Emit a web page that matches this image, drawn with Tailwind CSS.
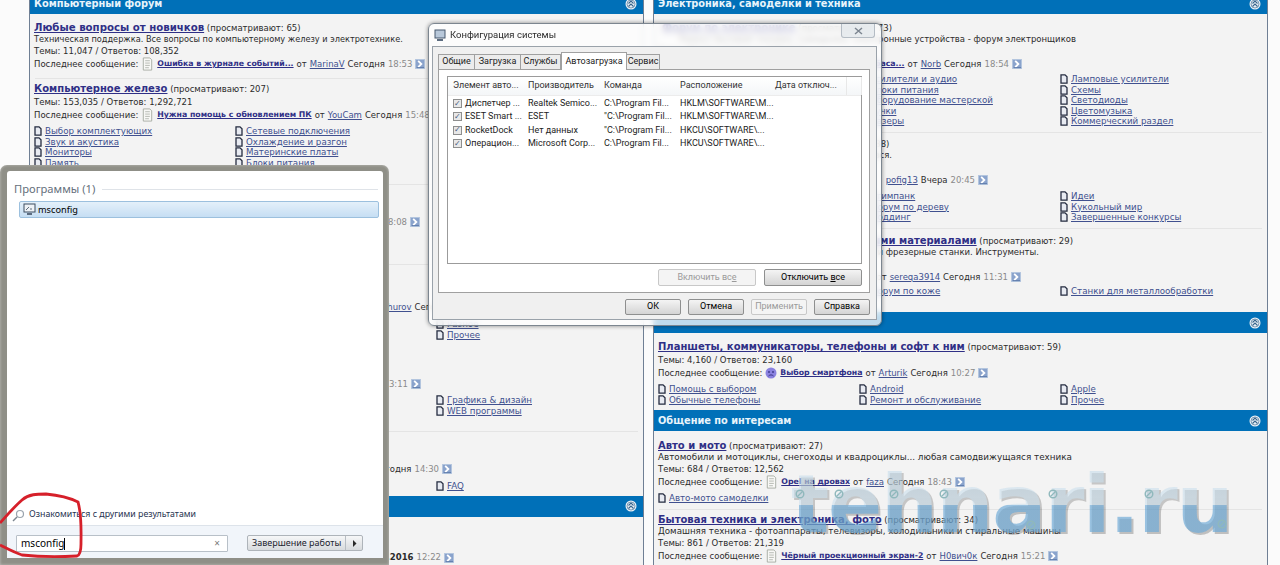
<!DOCTYPE html>
<html lang="ru">
<head>
<meta charset="utf-8">
<title>msconfig</title>
<script src="https://cdn.jsdelivr.net/npm/@tailwindcss/browser@4"></script>
</head>
<body class="m-0">
<svg class="hidden" width="0" height="0">
  <symbol id="doc" viewBox="0 0 8 10"><path d="M1 .8h4l2 2v6.400H1z" fill="#e8ebf2" stroke="#252c40" stroke-width="1.300"/></symbol>
  <symbol id="post" viewBox="0 0 13 15"><path d="M2 1h7l2 2v11H2z" fill="#f8f8f6" stroke="#a8aca4"/><path d="M4 4h5M4 6.500h5M4 9h5M4 11.500h4" stroke="#b4b8b0"/></symbol>
  <symbol id="go" viewBox="0 0 11 11"><rect width="11" height="11" fill="#8aa3cc"/><rect x=".5" y=".5" width="10" height="10" fill="none" stroke="#b8c8e0"/><path d="M3.500 2l3.500 3.500-3.500 3.500" fill="none" stroke="#fff" stroke-width="2"/><path d="M2 9.500h8" stroke="#5c78a8"/></symbol>
  <symbol id="up" viewBox="0 0 12 12"><circle cx="6" cy="6" r="5.500" fill="#e9f0f6"/><circle cx="6" cy="6" r="4" fill="none" stroke="#7c9ab4"/><path d="M3.500 5.500L6 3l2.500 2.500M3.500 8.500L6 6l2.500 2.500" fill="none" stroke="#38658c" stroke-width="1.100"/></symbol>
  <symbol id="mark" viewBox="0 0 10 10"><circle cx="5" cy="5" r="3.800" fill="none" stroke="#8fb8bc" stroke-width="1.400"/><path d="M2.500 7.500l5-5" stroke="#8fb8bc" stroke-width="1.200"/></symbol>
</svg>

<div class="relative w-[1280px] h-[565px] overflow-hidden bg-[#fbfbfb] font-['DejaVu_Sans',sans-serif] text-[8.500px] text-[#2b2b2b] blur-[0.45px]">
  <div class="flex h-[565px] pl-[29px] gap-[9px]">

    <!-- left column -->
    <div class="w-[615px] h-[565px] shrink-0 overflow-hidden bg-[#f3f3f3] border-x border-[#6f7f94]">
      <div class="h-[21px] -mt-[7px] bg-[#0070b8] flex items-center justify-between pl-[4px] pr-[6px] text-[9.800px] font-bold text-[#e8f4fb]"><span class="mt-[2px]">Компьютерный форум</span><svg class="w-[12px] h-[12px]"><use href="#up"/></svg></div>
      <div class="pl-[4px]">
        <div class="h-[12px] mt-[8px] leading-[12px] whitespace-nowrap"><a class="text-[10.200px] font-bold underline text-[#2f2f86]">Любые вопросы от новичков</a> (просматривают: 65)</div>
        <div class="h-[11px] leading-[11px] text-[8.200px] whitespace-nowrap">Техническая поддержка. Все вопросы по компьютерному железу и электротехнике.</div>
        <div class="h-[12px] leading-[12px] whitespace-nowrap">Темы: 11,047 / Ответов: 108,352</div>
        <div class="h-[14px] flex items-center gap-[3px] whitespace-nowrap"><span>Последнее сообщение:</span><svg class="w-[13px] h-[14px]"><use href="#post"/></svg><a class="text-[7.800px] font-bold underline text-[#2f2f86]">Ошибка в журнале событий...</a><span>от</span><a class="underline text-[#40508f]">MarinaV</a><span>Сегодня</span><span class="text-[#8a8a8a]">18:53</span><svg class="w-[10px] h-[10px]"><use href="#go"/></svg></div>
      </div>
      <div class="h-px mt-[7px] mx-[5px] bg-[#e4e4e4]"></div>
      <div class="pl-[4px]">
        <div class="h-[12px] mt-[4px] leading-[12px] whitespace-nowrap"><a class="text-[10px] font-bold underline text-[#2f2f86]">Компьютерное железо</a> (просматривают: 207)</div>
        <div class="h-[12px] mt-px leading-[12px] whitespace-nowrap">Темы: 153,035 / Ответов: 1,292,721</div>
        <div class="h-[14px] flex items-center gap-[3px] whitespace-nowrap"><span>Последнее сообщение:</span><svg class="w-[13px] h-[14px]"><use href="#post"/></svg><a class="text-[7.800px] font-bold underline text-[#2f2f86]">Нужна помощь с обновлением ПК</a><span>от</span><a class="underline text-[#40508f]">YouCam</a><span>Сегодня</span><span class="text-[#8a8a8a]">15:48</span></div>
        <div class="grid grid-cols-[201px_201px_201px] mt-[4px] text-[8.700px] text-[#40508f] leading-[10.500px]">
          <div class="flex items-center gap-[3px] h-[10.500px]"><svg class="w-[8px] h-[10px]"><use href="#doc"/></svg><a class="underline">Выбор комплектующих</a></div>
          <div class="flex items-center gap-[3px] h-[10.500px]"><svg class="w-[8px] h-[10px]"><use href="#doc"/></svg><a class="underline">Сетевые подключения</a></div><div></div>
          <div class="flex items-center gap-[3px] h-[10.500px]"><svg class="w-[8px] h-[10px]"><use href="#doc"/></svg><a class="underline">Звук и акустика</a></div>
          <div class="flex items-center gap-[3px] h-[10.500px]"><svg class="w-[8px] h-[10px]"><use href="#doc"/></svg><a class="underline">Охлаждение и разгон</a></div><div></div>
          <div class="flex items-center gap-[3px] h-[10.500px]"><svg class="w-[8px] h-[10px]"><use href="#doc"/></svg><a class="underline">Мониторы</a></div>
          <div class="flex items-center gap-[3px] h-[10.500px]"><svg class="w-[8px] h-[10px]"><use href="#doc"/></svg><a class="underline">Материнские платы</a></div><div></div>
          <div class="flex items-center gap-[3px] h-[10.500px]"><svg class="w-[8px] h-[10px]"><use href="#doc"/></svg><a class="underline">Память</a></div>
          <div class="flex items-center gap-[3px] h-[10.500px]"><svg class="w-[8px] h-[10px]"><use href="#doc"/></svg><a class="underline">Блоки питания</a></div><div></div>
        </div>
      </div>
      <div class="h-px mt-[16px] mx-[5px] bg-[#e4e4e4]"></div>
      <div class="h-[12px] mt-[31px] w-[390px] flex justify-end items-center gap-[3px] whitespace-nowrap"><span>Сегодня</span><span class="text-[#8a8a8a]">18:08</span><svg class="w-[10px] h-[10px]"><use href="#go"/></svg></div>
      <div class="h-px mt-[36px] mx-[5px] bg-[#e4e4e4]"></div>
      <div class="h-[12px] mt-[36px] w-[422px] flex justify-end items-center gap-[3px] whitespace-nowrap"><a class="underline text-[#40508f]">Bahurov</a><span>Сегодня</span></div>
      <div class="mt-[6px] pl-[406px] text-[8.700px] text-[#40508f] leading-[10.500px]">
        <div class="flex items-center gap-[3px] h-[10.500px]"><svg class="w-[8px] h-[10px]"><use href="#doc"/></svg><a class="underline">Разное</a></div>
        <div class="flex items-center gap-[3px] h-[10.500px]"><svg class="w-[8px] h-[10px]"><use href="#doc"/></svg><a class="underline">Прочее</a></div>
      </div>
      <div class="h-[12px] mt-[38px] w-[391px] flex justify-end items-center gap-[3px] whitespace-nowrap"><span>Сегодня</span><span class="text-[#8a8a8a]">13:11</span><svg class="w-[10px] h-[10px]"><use href="#go"/></svg></div>
      <div class="mt-[5px] pl-[406px] text-[8.700px] text-[#40508f] leading-[10.500px]">
        <div class="flex items-center gap-[3px] h-[10.500px]"><svg class="w-[8px] h-[10px]"><use href="#doc"/></svg><a class="underline">Графика &amp; дизайн</a></div>
        <div class="flex items-center gap-[3px] h-[10.500px]"><svg class="w-[8px] h-[10px]"><use href="#doc"/></svg><a class="underline">WEB программы</a></div>
      </div>
      <div class="h-px mt-[15px] mx-[5px] bg-[#e4e4e4]"></div>
      <div class="h-[12px] mt-[31px] w-[422px] flex justify-end items-center gap-[3px] whitespace-nowrap"><span>Сегодня</span><span class="text-[#8a8a8a]">14:30</span><svg class="w-[10px] h-[10px]"><use href="#go"/></svg></div>
      <div class="mt-[6px] pl-[406px] text-[8.700px] text-[#40508f] leading-[10.500px]">
        <div class="flex items-center gap-[3px] h-[10.500px]"><svg class="w-[8px] h-[10px]"><use href="#doc"/></svg><a class="underline">FAQ</a></div>
      </div>
      <div class="h-[21px] mt-[4px] bg-[#0070b8] flex items-center justify-end pr-[6px]"><svg class="w-[12px] h-[12px]"><use href="#up"/></svg></div>
      <div class="h-[12px] mt-[35px] w-[424px] flex justify-end items-center gap-[3px] whitespace-nowrap"><span class="font-bold">12.03.2016</span><span class="text-[#8a8a8a]">12:22</span><svg class="w-[10px] h-[10px]"><use href="#go"/></svg></div>
    </div>

    <!-- right column -->
    <div class="w-[615px] h-[565px] shrink-0 overflow-hidden bg-[#f3f3f3] border-x border-[#6f7f94]">
      <div class="h-[21px] -mt-[7px] bg-[#0070b8] flex items-center justify-between pl-[4px] pr-[6px] text-[9.800px] font-bold text-[#e8f4fb]"><span class="mt-[2px]">Электроника, самоделки и техника</span><svg class="w-[12px] h-[12px]"><use href="#up"/></svg></div>
      <div class="pl-[4px]">
        <div class="h-[12px] mt-[8px] w-[234px] text-right leading-[12px] whitespace-nowrap"><a class="text-[10px] font-bold underline text-[#2f2f86]">Форум по электронике</a> (просматривают: 73)</div>
        <div class="h-[11px] w-[418px] text-right leading-[11px] whitespace-nowrap">Ремонт бытовой техники. Самоделки, электронные устройства - форум электронщиков</div>
        <div class="h-[12px] leading-[12px] whitespace-nowrap">Темы: 60,212 / Ответов: 520,114</div>
        <div class="h-[14px] w-[364px] flex justify-end items-center gap-[3px] whitespace-nowrap"><a class="text-[7.800px] font-bold underline text-[#2f2f86]">Проверка усилителя для баса...</a><span>от</span><a class="underline text-[#40508f]">Norb</a><span>Сегодня</span><span class="text-[#8a8a8a]">18:54</span><svg class="w-[10px] h-[10px]"><use href="#go"/></svg></div>
        <div class="grid grid-cols-[201px_201px_201px] mt-[3px] text-[8.700px] text-[#40508f] leading-[10.500px]">
          <div class="h-[10.500px]"></div><div class="flex items-center gap-[3px] h-[10.500px]"><svg class="w-[8px] h-[10px]"><use href="#doc"/></svg><a class="underline">Усилители и аудио</a></div><div class="flex items-center gap-[3px] h-[10.500px]"><svg class="w-[8px] h-[10px]"><use href="#doc"/></svg><a class="underline">Ламповые усилители</a></div>
          <div class="h-[10.500px]"></div><div class="flex items-center gap-[3px] h-[10.500px]"><svg class="w-[8px] h-[10px]"><use href="#doc"/></svg><a class="underline">Блоки питания</a></div><div class="flex items-center gap-[3px] h-[10.500px]"><svg class="w-[8px] h-[10px]"><use href="#doc"/></svg><a class="underline">Схемы</a></div>
          <div class="h-[10.500px]"></div><div class="flex items-center gap-[3px] h-[10.500px]"><svg class="w-[8px] h-[10px]"><use href="#doc"/></svg><a class="underline">Оборудование мастерской</a></div><div class="flex items-center gap-[3px] h-[10.500px]"><svg class="w-[8px] h-[10px]"><use href="#doc"/></svg><a class="underline">Светодиоды</a></div>
          <div class="h-[10.500px]"></div><div class="flex items-center gap-[3px] h-[10.500px]"><svg class="w-[8px] h-[10px]"><use href="#doc"/></svg><a class="underline">Ручки</a></div><div class="flex items-center gap-[3px] h-[10.500px]"><svg class="w-[8px] h-[10px]"><use href="#doc"/></svg><a class="underline">Цветомузыка</a></div>
          <div class="h-[10.500px]"></div><div class="flex items-center gap-[3px] h-[10.500px]"><svg class="w-[8px] h-[10px]"><use href="#doc"/></svg><a class="underline">Лазеры</a></div><div class="flex items-center gap-[3px] h-[10.500px]"><svg class="w-[8px] h-[10px]"><use href="#doc"/></svg><a class="underline">Коммерческий раздел</a></div>
        </div>
      </div>
      <div class="h-px mt-[5.500px] mx-[5px] bg-[#e4e4e4]"></div>
      <div class="pl-[4px]">
        <div class="h-[12px] mt-[5px] w-[231px] text-right leading-[12px] whitespace-nowrap"><a class="text-[10px] font-bold underline text-[#2f2f86]">Самоделки и конкурсы</a> (просматривают: 38)</div>
        <div class="h-[11px] w-[234px] text-right leading-[11px] whitespace-nowrap">Поделки своими руками, для дома и для всех, вся.</div>
        <div class="h-[12px]"></div>
        <div class="h-[14px] w-[330px] flex justify-end items-center gap-[3px] whitespace-nowrap"><a class="underline text-[#40508f]">pofig13</a><span>Вчера</span><span class="text-[#8a8a8a]">20:45</span><svg class="w-[10px] h-[10px]"><use href="#go"/></svg></div>
        <div class="grid grid-cols-[201px_201px_201px] mt-[4px] text-[8.700px] text-[#40508f] leading-[10.500px]">
          <div class="h-[10.500px]"></div><div class="flex items-center gap-[3px] h-[10.500px]"><svg class="w-[8px] h-[10px]"><use href="#doc"/></svg><a class="underline">Стимпанк</a></div><div class="flex items-center gap-[3px] h-[10.500px]"><svg class="w-[8px] h-[10px]"><use href="#doc"/></svg><a class="underline">Идеи</a></div>
          <div class="h-[10.500px]"></div><div class="flex items-center gap-[3px] h-[10.500px]"><svg class="w-[8px] h-[10px]"><use href="#doc"/></svg><a class="underline">Форум по дереву</a></div><div class="flex items-center gap-[3px] h-[10.500px]"><svg class="w-[8px] h-[10px]"><use href="#doc"/></svg><a class="underline">Кукольный мир</a></div>
          <div class="h-[10.500px]"></div><div class="flex items-center gap-[3px] h-[10.500px]"><svg class="w-[8px] h-[10px]"><use href="#doc"/></svg><a class="underline">Моддинг</a></div><div class="flex items-center gap-[3px] h-[10.500px]"><svg class="w-[8px] h-[10px]"><use href="#doc"/></svg><a class="underline">Завершенные конкурсы</a></div>
        </div>
      </div>
      <div class="h-px mt-[5.500px] mx-[5px] bg-[#e4e4e4]"></div>
      <div class="pl-[4px]">
        <div class="h-[12px] mt-[6px] w-[415px] text-right leading-[12px] whitespace-nowrap"><a class="text-[10px] font-bold underline text-[#2f2f86]">Работа с различными материалами</a> (просматривают: 29)</div>
        <div class="h-[11px] w-[381px] text-right leading-[11px] whitespace-nowrap">Токарные станки, ЧПУ и фрезерные станки. Инструменты.</div>
        <div class="h-[12px]"></div>
        <div class="h-[14px] w-[363px] flex justify-end items-center gap-[3px] whitespace-nowrap"><span>от</span><a class="underline text-[#40508f]">sereqa3914</a><span>Сегодня</span><span class="text-[#8a8a8a]">11:31</span><svg class="w-[10px] h-[10px]"><use href="#go"/></svg></div>
        <div class="grid grid-cols-[201px_201px_201px] mt-[2px] text-[8.700px] text-[#40508f] leading-[10.500px]">
          <div class="h-[10.500px]"></div><div class="flex items-center gap-[3px] h-[10.500px]"><svg class="w-[8px] h-[10px]"><use href="#doc"/></svg><a class="underline">Форум по коже</a></div><div class="flex items-center gap-[3px] h-[10.500px]"><svg class="w-[8px] h-[10px]"><use href="#doc"/></svg><a class="underline">Станки для металлообработки</a></div>
        </div>
      </div>
      <div class="h-[21px] mt-[15.500px] bg-[#0070b8] flex items-center justify-end pr-[6px]"><svg class="w-[12px] h-[12px]"><use href="#up"/></svg></div>
      <div class="pl-[4px]">
        <div class="h-[12px] mt-[8px] leading-[12px] whitespace-nowrap"><a class="text-[10px] font-bold underline text-[#2f2f86]">Планшеты, коммуникаторы, телефоны и софт к ним</a> (просматривают: 59)</div>
        <div class="h-[12px] mt-px leading-[12px] whitespace-nowrap">Темы: 4,160 / Ответов: 23,160</div>
        <div class="h-[14px] flex items-center gap-[3px] whitespace-nowrap"><span>Последнее сообщение:</span><svg class="w-[12px] h-[12px]" viewBox="0 0 12 12"><circle cx="6" cy="6" r="5.500" fill="#8a82e0"/><circle cx="4" cy="5" r=".9" fill="#3a3488"/><circle cx="8" cy="5" r=".9" fill="#3a3488"/><path d="M3.500 9c1.500-1.500 3.500-1.500 5 0" fill="none" stroke="#3a3488"/></svg><a class="text-[7.800px] font-bold underline text-[#2f2f86]">Выбор смартфона</a><span>от</span><a class="underline text-[#40508f]">Arturik</a><span>Сегодня</span><span class="text-[#8a8a8a]">10:27</span><svg class="w-[10px] h-[10px]"><use href="#go"/></svg></div>
        <div class="grid grid-cols-[201px_201px_201px] mt-[4px] text-[8.700px] text-[#40508f] leading-[10.500px]">
          <div class="flex items-center gap-[3px] h-[10.500px]"><svg class="w-[8px] h-[10px]"><use href="#doc"/></svg><a class="underline">Помощь с выбором</a></div><div class="flex items-center gap-[3px] h-[10.500px]"><svg class="w-[8px] h-[10px]"><use href="#doc"/></svg><a class="underline">Android</a></div><div class="flex items-center gap-[3px] h-[10.500px]"><svg class="w-[8px] h-[10px]"><use href="#doc"/></svg><a class="underline">Apple</a></div>
          <div class="flex items-center gap-[3px] h-[10.500px]"><svg class="w-[8px] h-[10px]"><use href="#doc"/></svg><a class="underline">Обычные телефоны</a></div><div class="flex items-center gap-[3px] h-[10.500px]"><svg class="w-[8px] h-[10px]"><use href="#doc"/></svg><a class="underline">Ремонт и обслуживание</a></div><div class="flex items-center gap-[3px] h-[10.500px]"><svg class="w-[8px] h-[10px]"><use href="#doc"/></svg><a class="underline">Прочее</a></div>
        </div>
      </div>
      <div class="h-[21px] mt-[5px] bg-[#0070b8] flex items-center justify-between pl-[4px] pr-[6px] text-[9.800px] font-bold text-[#e8f4fb]"><span class="mt-[2px]">Общение по интересам</span><svg class="w-[12px] h-[12px]"><use href="#up"/></svg></div>
      <div class="pl-[4px]">
        <div class="h-[12px] mt-[9px] leading-[12px] whitespace-nowrap"><a class="text-[10px] font-bold underline text-[#2f2f86]">Авто и мото</a> (просматривают: 27)</div>
        <div class="h-[11px] leading-[11px] text-[8.800px] whitespace-nowrap">Автомобили и мотоциклы, снегоходы и квадроциклы... любая самодвижущаяся техника</div>
        <div class="h-[12px] leading-[12px] whitespace-nowrap">Темы: 684 / Ответов: 12,562</div>
        <div class="h-[14px] flex items-center gap-[3px] whitespace-nowrap"><span>Последнее сообщение:</span><svg class="w-[13px] h-[14px]"><use href="#post"/></svg><a class="text-[7.800px] font-bold underline text-[#2f2f86]">Opel на дровах</a><span>от</span><a class="underline text-[#40508f]">faza</a><span>Сегодня</span><span class="text-[#8a8a8a]">18:43</span><svg class="w-[10px] h-[10px]"><use href="#go"/></svg></div>
        <div class="mt-[4px] text-[8.700px] text-[#40508f] leading-[10.500px]"><div class="flex items-center gap-[3px] h-[10.500px]"><svg class="w-[8px] h-[10px]"><use href="#doc"/></svg><a class="underline">Авто-мото самоделки</a></div></div>
      </div>
      <div class="h-px mt-[5.500px] mx-[5px] bg-[#e4e4e4]"></div>
      <div class="pl-[4px]">
        <div class="h-[12px] mt-[4px] leading-[12px] whitespace-nowrap"><a class="text-[10px] font-bold underline text-[#2f2f86]">Бытовая техника и электроника, фото</a> (просматривают: 34)</div>
        <div class="h-[11px] leading-[11px] text-[8.700px] whitespace-nowrap">Домашняя техника - фотоаппараты, телевизоры, холодильники и стиральные машины</div>
        <div class="h-[12px] leading-[12px] whitespace-nowrap">Темы: 861 / Ответов: 21,319</div>
        <div class="h-[14px] flex items-center gap-[3px] whitespace-nowrap"><span>Последнее сообщение:</span><svg class="w-[13px] h-[14px]"><use href="#post"/></svg><a class="text-[7.800px] font-bold underline text-[#2f2f86]">Чёрный проекционный экран-2</a><span>от</span><a class="underline text-[#40508f]">H0вич0к</a><span>Сегодня</span><span class="text-[#8a8a8a]">15:21</span><svg class="w-[10px] h-[10px]"><use href="#go"/></svg></div>
      </div>
    </div>
  </div>

  <!-- start menu window -->
  <div class="absolute left-0 top-[165px] w-[389px] h-[400px] rounded-t-[7px] bg-[#8f8f87] shadow-[inset_0_0_3px_rgba(255,255,255,.45)] pl-[7px] pr-[6px] pt-[6px] pb-[7px] font-['Noto_Sans',sans-serif]">
    <div class="h-full rounded-t-[3px] bg-white flex flex-col text-[#1a2a3c]">
      <div class="flex items-center gap-[7px] h-[14px] mt-[11px] pl-[7px] pr-[5px] text-[11.200px] text-[#66707c]"><span class="whitespace-nowrap">Программы (1)</span><div class="flex-1 h-px bg-[#dfe3e8]"></div></div>
      <div class="h-[17px] mt-[5px] ml-[12px] mr-[4px] flex items-center gap-[2px] pl-[3px] rounded-[2px] border border-[#9cc0de] bg-linear-to-b from-[#e4f0fa] to-[#c6def3] text-[9.200px] text-black">
        <svg class="w-[13px] h-[13px]" viewBox="0 0 13 13"><rect x="1" y="1" width="11" height="8" fill="#eef2f6" stroke="#3c4c60"/><path d="M3 7l3-3M7 6h2" stroke="#3c4c60" stroke-width=".8"/><path d="M4 11h5" stroke="#5c6c80" stroke-width="2"/></svg>
        <span>msconfig</span>
      </div>
      <div class="flex-1"></div>
      <div class="flex items-center gap-[4px] h-[14px] mb-[3px] pl-[5px] text-[8.800px] text-[#1f3350]">
        <svg class="w-[13px] h-[13px]" viewBox="0 0 13 13"><circle cx="8" cy="5" r="3.500" fill="none" stroke="#9aa4ae" stroke-width="1.200"/><path d="M5 8l-4 4" stroke="#7c8690" stroke-width="1.500"/></svg>
        <span class="whitespace-nowrap">Ознакомиться с другими результатами</span>
      </div>
      <div class="h-[33px] border-t border-[#dde3ea] bg-[#f1f5fa] flex items-start pt-[9px] pl-[9px] gap-[19px]">
        <div class="w-[212px] h-[17px] bg-white border border-[#b8c0c8] rounded-[1px] flex items-center justify-between pl-[4px] pr-[7px] text-[10px] text-black"><span class="flex items-center">msconfig<span class="inline-block w-px h-[12px] bg-black"></span></span><span class="text-[#7b7b7b] text-[10px]">×</span></div>
        <div class="w-[116px] h-[16px] rounded-[2px] border border-[#aeb4ba] bg-linear-to-b from-[#f6f7f8] to-[#d8dbde] flex items-center text-[9px] text-[#1c2430]"><span class="flex-1 pl-[4px] whitespace-nowrap">Завершение работы</span><span class="w-[17px] h-full border-l border-[#b8bec4] flex items-center justify-center"><svg class="w-[5px] h-[7px]" viewBox="0 0 5 7"><path d="M1 0l3.500 3.500L1 7z" fill="#2a2a2a"/></svg></span></div>
      </div>
    </div>
  </div>

  <!-- red hand-drawn circle -->
  <svg class="absolute left-0 top-[480px] w-[100px] h-[85px]" viewBox="0 0 100 85" fill="none"><path d="M0 43C8 34 14 27 22 20C29 14 37 14 46 14C57 15 68 17 78 22C82 36 81 52 81 64C81 71 80 75 77 76C60 77 40 77 22 75C13 72 6 68 0 65" stroke="#d6202a" stroke-width="2.800"/></svg>

  <!-- msconfig dialog -->
  <div class="absolute left-[428px] top-[23px] w-[454px] h-[303px] rounded-[6px] border border-[#7c8690] bg-white/75 backdrop-blur-[3px] shadow-[0_0_4px_rgba(0,0,0,.45)] font-['Roboto',sans-serif] text-[9px] text-[#222] flex flex-col">
    <div class="h-[22px] flex items-center pl-[5px] relative">
      <svg class="w-[13px] h-[13px] mr-[3px]" viewBox="0 0 13 13"><rect x="1" y="1" width="10" height="8" fill="#b8c8da" stroke="#46586e"/><path d="M3 11h6" stroke="#5c6c80" stroke-width="2"/></svg>
      <span class="text-[9.500px] text-[#2a2a2a]">Конфигурация системы</span>
      <div class="absolute right-[6px] top-0 w-[34px] h-[14px] rounded-b-[3px] border border-t-0 border-[#b4bcc4] bg-[#e4e8ec]/80 flex items-center justify-center"><svg class="w-[9px] h-[8px]" viewBox="0 0 9 8"><path d="M1 1l7 6M8 1L1 7" stroke="#7c8590" stroke-width="1.500"/></svg></div>
    </div>
    <div class="flex-1 ml-[3px] mr-[4px] mb-[5px] border border-[#9aa2aa] bg-[#f0f0f0] pl-[5px] pr-[6px] pt-[5px] relative">
      <div class="flex items-end h-[17px]">
        <div class="w-[37px] h-[16px] -mb-px border border-[#a0a0a0] bg-[#ececec] flex items-center justify-center">Общие</div>
        <div class="w-[46px] h-[16px] -mb-px border border-l-0 border-[#a0a0a0] bg-[#ececec] flex items-center justify-center">Загрузка</div>
        <div class="w-[40px] h-[16px] -mb-px border border-l-0 border-[#a0a0a0] bg-[#ececec] flex items-center justify-center">Службы</div>
        <div class="w-[66px] h-[18px] -mb-px border border-[#a0a0a0] border-b-0 bg-white flex items-center justify-center relative z-10">Автозагрузка</div>
        <div class="w-[33px] h-[16px] -mb-px border border-l-0 border-[#a0a0a0] bg-[#ececec] flex items-center justify-center">Сервис</div>
      </div>
      <div class="h-[224px] border border-[#a0a0a0] bg-white pt-[6px] pl-[8px] pr-[7px]">
        <div class="h-[188px] border border-[#9b9b9b]">
          <div class="grid grid-cols-[75px_76px_76px_95px_71px_16px] h-[19px] items-center pl-[5px] border-b border-[#ececec] bg-linear-to-b from-white to-[#f4f6f8] text-[#333]">
            <span class="whitespace-nowrap overflow-hidden">Элемент авто...</span><span>Производитель</span><span>Команда</span><span>Расположение</span><span class="whitespace-nowrap">Дата отключ...</span><span class="h-full border-x border-[#e8e8e8]"></span>
          </div>
          <div class="grid grid-cols-[75px_76px_76px_95px] auto-rows-[13.300px] items-center pl-[5px] pt-px whitespace-nowrap">
            <span class="flex items-center gap-[3px]"><span class="w-[9px] h-[9px] border border-[#8e8f8f] bg-[#e8e8e8] flex items-center justify-center text-[8px] leading-none text-[#455a80]">✓</span>Диспетчер ...</span><span>Realtek Semico...</span><span>C:\Program Fil...</span><span>HKLM\SOFTWARE\M...</span>
            <span class="flex items-center gap-[3px]"><span class="w-[9px] h-[9px] border border-[#8e8f8f] bg-[#e8e8e8] flex items-center justify-center text-[8px] leading-none text-[#455a80]">✓</span>ESET Smart ...</span><span>ESET</span><span>"C:\Program Fil...</span><span>HKLM\SOFTWARE\M...</span>
            <span class="flex items-center gap-[3px]"><span class="w-[9px] h-[9px] border border-[#8e8f8f] bg-[#e8e8e8] flex items-center justify-center text-[8px] leading-none text-[#455a80]">✓</span>RocketDock</span><span>Нет данных</span><span>"C:\Program Fil...</span><span>HKCU\SOFTWARE\...</span>
            <span class="flex items-center gap-[3px]"><span class="w-[9px] h-[9px] border border-[#8e8f8f] bg-[#e8e8e8] flex items-center justify-center text-[8px] leading-none text-[#455a80]">✓</span>Операцион...</span><span>Microsoft Corp...</span><span>C:\Program Fil...</span><span>HKCU\SOFTWARE\...</span>
          </div>
        </div>
        <div class="flex justify-end gap-[8px] mt-[5px]">
          <div class="w-[98px] h-[17px] border border-[#c8c8c8] rounded-[2px] bg-[#f4f4f4] text-[#9a9a9a] flex items-center justify-center"><span>Включить вс<u>е</u></span></div>
          <div class="w-[98px] h-[17px] border border-[#8e8f8f] rounded-[2px] bg-linear-to-b from-[#f4f4f4] to-[#d4d4d4] text-black flex items-center justify-center"><span>Отключить <u>в</u>се</span></div>
        </div>
      </div>
      <div class="flex justify-end gap-[7px] mt-[6px]">
        <div class="w-[56px] h-[16px] border border-[#8e8f8f] rounded-[2px] bg-linear-to-b from-[#f4f4f4] to-[#d4d4d4] text-black flex items-center justify-center">ОК</div>
        <div class="w-[56px] h-[16px] border border-[#8e8f8f] rounded-[2px] bg-linear-to-b from-[#f4f4f4] to-[#d4d4d4] text-black flex items-center justify-center">Отмена</div>
        <div class="w-[56px] h-[16px] border border-[#c8c8c8] rounded-[2px] bg-[#f4f4f4] text-[#9a9a9a] flex items-center justify-center">Применить</div>
        <div class="w-[56px] h-[16px] border border-[#8e8f8f] rounded-[2px] bg-linear-to-b from-[#f4f4f4] to-[#d4d4d4] text-black flex items-center justify-center">Справка</div>
      </div>
    </div>
  </div>

  <!-- tehnari.ru watermark -->
  <div class="absolute left-[795px] top-[452px] w-[460px] h-[105px]">
    <div class="-ml-[4px] text-[80px] leading-[105px] font-bold tracking-[-1.300px] whitespace-nowrap font-['DejaVu_Sans',sans-serif] bg-[linear-gradient(180deg,rgba(190,215,232,.55)_0%,rgba(205,225,238,.6)_50%,rgba(110,170,215,.68)_51%,rgba(110,170,215,.68)_100%)] bg-clip-text text-transparent drop-shadow-[2px_2px_0_rgba(90,90,90,.5)]">tehnari.ru</div>
    <svg class="absolute left-[0px] top-[37px] w-[10px] h-[10px]"><use href="#mark"/></svg>
    <svg class="absolute left-[39px] top-[37px] w-[10px] h-[10px]"><use href="#mark"/></svg>
    <svg class="absolute left-[94px] top-[37px] w-[10px] h-[10px]"><use href="#mark"/></svg>
    <svg class="absolute left-[144px] top-[37px] w-[10px] h-[10px]"><use href="#mark"/></svg>
    <svg class="absolute left-[253px] top-[37px] w-[10px] h-[10px]"><use href="#mark"/></svg>
    <svg class="absolute left-[349px] top-[37px] w-[10px] h-[10px]"><use href="#mark"/></svg>
    <svg class="absolute left-[231px] top-[68px] w-[10px] h-[10px]"><use href="#mark"/></svg>
    <svg class="absolute left-[422px] top-[67px] w-[10px] h-[10px]"><use href="#mark"/></svg>
  </div>
</div>
</body>
</html>
